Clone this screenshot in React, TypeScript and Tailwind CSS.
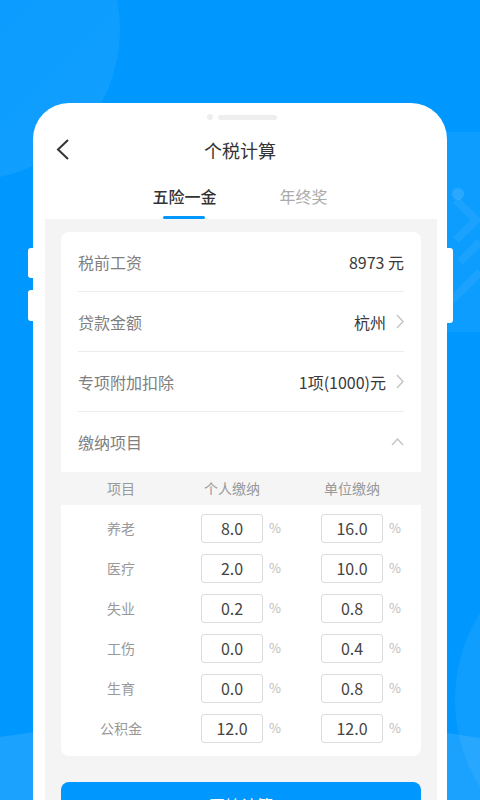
import React from 'react';

const FONT = "font-['Noto_Sans_CJK_SC','Noto_Sans',sans-serif]";

const rows = [
  { name: '养老', me: '8.0', org: '16.0' },
  { name: '医疗', me: '2.0', org: '10.0' },
  { name: '失业', me: '0.2', org: '0.8' },
  { name: '工伤', me: '0.0', org: '0.4' },
  { name: '生育', me: '0.0', org: '0.8' },
  { name: '公积金', me: '12.0', org: '12.0' },
];

const ChevronRight = () => (
  <svg width="8" height="15" viewBox="0 0 8 15" className="ml-[10px]">
    <polyline points="1,1 7,7.5 1,14" fill="none" stroke="#c4c4c4" strokeWidth="1.4" />
  </svg>
);

const InfoRow = ({ label, value, arrow }: { label: string; value: string; arrow?: boolean }) => (
  <div className="h-[60px] flex items-center justify-between border-b border-[#ececec]">
    <span className="text-[16px] text-[#808080]">{label}</span>
    <span className="flex items-center text-[16px] text-[#3a3a3a]">
      {value}
      {arrow && <ChevronRight />}
    </span>
  </div>
);

const Cell = ({ v }: { v: string }) => (
  <div className="w-[120px] flex items-center justify-center">
    <div className="w-[62px] h-[29px] border border-[#dcdcdc] rounded-[3px] flex items-center justify-center text-[16px] text-[#444]">
      {v}
    </div>
    <span className="ml-[6px] w-[12px] text-[13px] text-[#bdbdbd]">%</span>
  </div>
);

const HeadCell = ({ t }: { t: string }) => (
  <div className="w-[120px] flex items-center justify-center">
    <div className="w-[62px] text-center whitespace-nowrap">{t}</div>
    <span className="ml-[6px] w-[12px]" />
  </div>
);

export default function App() {
  return (
    <div className={`relative w-[480px] h-[800px] overflow-hidden bg-[#0098fe] ${FONT}`}>
      {/* décor du fond */}
      <svg className="absolute inset-0" width="480" height="800" viewBox="0 0 480 800">
        <defs>
          <linearGradient id="g1" x1="0" y1="0" x2="1" y2="1">
            <stop offset="0" stopColor="#ffffff" stopOpacity="0" />
            <stop offset="1" stopColor="#ffffff" stopOpacity="0.08" />
          </linearGradient>
        </defs>
        <circle cx="-30" cy="30" r="150" fill="url(#g1)" />
        <circle cx="620" cy="700" r="165" fill="#ffffff" fillOpacity="0.06" />
        <path d="M0 737 Q 240 700 480 738 L480 800 L0 800 Z" fill="#ffffff" fillOpacity="0.1" />
        <rect x="447" y="132" width="33" height="200" fill="#ffffff" fillOpacity="0.05" />
        <circle cx="458" cy="194" r="6" fill="#ffffff" fillOpacity="0.12" />
        <path d="M456 200 L476 220 L456 240 M460 262 L480 242 M452 300 L480 272" stroke="#ffffff" strokeOpacity="0.06" strokeWidth="8" fill="none" />
      </svg>

      {/* boutons latéraux */}
      <div className="absolute left-[28px] top-[248px] w-[8px] h-[30px] bg-white rounded-[3px]" />
      <div className="absolute left-[28px] top-[290px] w-[8px] h-[31px] bg-white rounded-[3px]" />
      <div className="absolute left-[444px] top-[248px] w-[9px] h-[75px] bg-white rounded-[3px]" />

      {/* téléphone */}
      <div className="relative mx-[33px] mt-[103px] h-[720px] bg-white rounded-t-[36px]">
        <div className="pt-[11px] flex justify-center items-center gap-[5px] pl-[4px]">
          <span className="w-[6px] h-[6px] rounded-full bg-[#eeeeee]" />
          <span className="w-[59px] h-[5px] rounded-full bg-[#eeeeee]" />
        </div>

        <div className="relative mt-[10px] h-[40px] flex items-center justify-center">
          <svg width="14" height="21" viewBox="0 0 14 21" className="absolute left-[23px] top-[9px]">
            <polyline points="12,1 2,10.5 12,20" fill="none" stroke="#333" strokeWidth="2" />
          </svg>
          <span className="text-[18px] text-[#333]">个税计算</span>
        </div>

        <div className="mt-[14px] flex justify-center gap-[63px]">
          <div className="flex flex-col items-center">
            <span className="h-[24px] leading-[24px] text-[16px] font-medium text-[#333]">五险一金</span>
            <span className="mt-[8px] w-[42px] h-[3px] rounded-sm bg-[#0098fe]" />
          </div>
          <div className="flex flex-col items-center">
            <span className="h-[24px] leading-[24px] text-[16px] text-[#aaaaaa]">年终奖</span>
            <span className="mt-[8px] h-[3px]" />
          </div>
        </div>

        <div className="ml-[12px] mr-[10px] bg-[#f4f4f4] px-[16px] pt-[13px] h-[600px]">
          <div className="bg-white rounded-[8px] pb-[8px]">
            <div className="px-[17px]">
              <InfoRow label="税前工资" value="8973 元" />
              <InfoRow label="贷款金额" value="杭州" arrow />
              <InfoRow label="专项附加扣除" value="1项(1000)元" arrow />
              <div className="h-[60px] flex items-center justify-between">
                <span className="text-[16px] text-[#808080]">缴纳项目</span>
                <svg width="13" height="8" viewBox="0 0 13 8">
                  <polyline points="1,7 6.5,1 12,7" fill="none" stroke="#c4c4c4" strokeWidth="1.4" />
                </svg>
              </div>
            </div>

            <div className="h-[33px] bg-[#f5f5f5] flex items-center text-[14px] text-[#999]">
              <div className="w-[120px] text-center">项目</div>
              <HeadCell t="个人缴纳" />
              <HeadCell t="单位缴纳" />
            </div>

            <div className="pt-[3px]">
              {rows.map((r) => (
                <div key={r.name} className="h-[40px] flex items-center">
                  <div className="w-[120px] text-center text-[14px] text-[#999]">{r.name}</div>
                  <Cell v={r.me} />
                  <Cell v={r.org} />
                </div>
              ))}
            </div>
          </div>

          <button className="mt-[26px] w-full h-[46px] rounded-[8px] bg-[#0098fe] text-white text-[16px]">
            开始计算
          </button>
        </div>
      </div>
    </div>
  );
}
